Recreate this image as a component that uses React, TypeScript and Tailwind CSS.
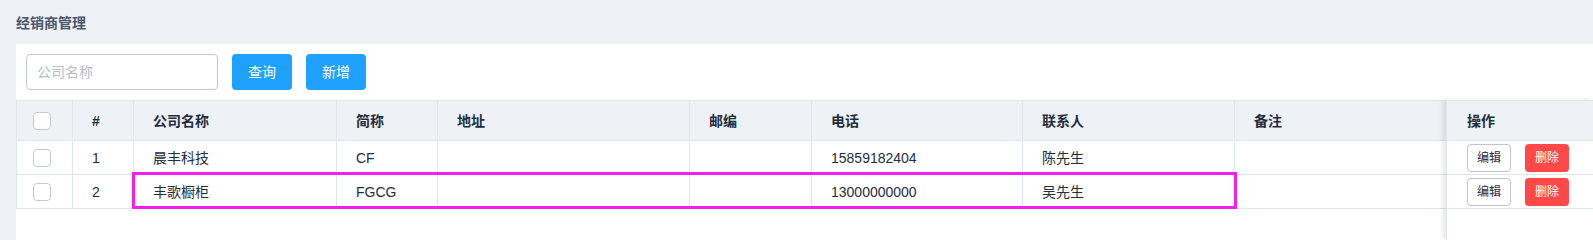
const font = { fontFamily: '"Liberation Sans", "Noto Sans CJK SC", sans-serif' };

const columns = ['#', '公司名称', '简称', '地址', '邮编', '电话', '联系人', '备注'];

const dealers = [
  { id: 1, name: '晨丰科技', short: 'CF', address: '', zip: '', phone: '15859182404', contact: '陈先生', note: '' },
  { id: 2, name: '丰歌橱柜', short: 'FGCG', address: '', zip: '', phone: '13000000000', contact: '吴先生', note: '' },
];

const grid = 'grid grid-cols-[56px_61px_203px_101px_252px_122px_211px_212px_1fr]';

function Checkbox() {
  return <span className="block w-[18px] h-[18px] rounded-[4px] border border-[#bfcbd9] bg-white" />;
}

function Cell({ children, last }: { children?: React.ReactNode; last?: boolean }) {
  return (
    <div className={`flex items-center pl-[19px] whitespace-nowrap ${last ? '' : 'border-r border-[#dfe6ec]'}`}>
      {children}
    </div>
  );
}

export default function App() {
  return (
    <div className="flex flex-col w-full min-h-screen overflow-hidden bg-[#eef1f6] text-[#1f2d3d]" style={font}>
      <div className="h-[44px] shrink-0 pl-4 pt-[13px] text-sm font-bold text-[#48576a]">经销商管理</div>

      <div className="relative flex-1 min-h-[180px] ml-4 bg-white">
        <div className="flex items-center gap-[14px] px-[10px] h-[56px]">
          <input
            className="w-[192px] h-[36px] rounded-[4px] border border-[#bfcbd9] px-[10px] text-sm outline-none placeholder:text-[#b4bccc]"
            placeholder="公司名称"
            style={font}
          />
          <button className="w-[60px] h-[36px] rounded-[4px] bg-[#20a0ff] text-sm text-white">查询</button>
          <button className="w-[60px] h-[36px] rounded-[4px] bg-[#20a0ff] text-sm text-white">新增</button>
        </div>

        <div className="border-t border-l border-[#dfe6ec] text-sm">
          <div className={`${grid} h-[40px] bg-[#eef1f6] border-b border-[#dfe6ec] font-bold`}>
            <div className="flex items-center pl-4 border-r border-[#dfe6ec]">
              <Checkbox />
            </div>
            {columns.map((c, i) => (
              <Cell key={c} last={i === columns.length - 1}>
                {c}
              </Cell>
            ))}
          </div>
          {dealers.map((d) => (
            <div key={d.id} className={`${grid} h-[34px] border-b border-[#dfe6ec]`}>
              <div className="flex items-center pl-4 border-r border-[#dfe6ec]">
                <Checkbox />
              </div>
              <Cell>{d.id}</Cell>
              <Cell>{d.name}</Cell>
              <Cell>{d.short}</Cell>
              <Cell>{d.address}</Cell>
              <Cell>{d.zip}</Cell>
              <Cell>{d.phone}</Cell>
              <Cell>{d.contact}</Cell>
              <Cell last>{d.note}</Cell>
            </div>
          ))}
        </div>

        {/* fixed action column */}
        <div className="absolute left-[1430px] right-0 top-[56px] bottom-0 bg-white border-l border-[#dfe6ec] shadow-[-3px_0_5px_rgba(0,0,0,0.1)] text-sm">
          <div className="h-[41px] flex items-center pl-5 bg-[#eef1f6] border-t border-b border-[#dfe6ec] font-bold">操作</div>
          {dealers.map((d) => (
            <div key={d.id} className="h-[34px] flex items-center gap-[14px] pl-5 border-b border-[#dfe6ec]">
              <button className="w-[44px] h-[28px] rounded-[4px] border border-[#c4c4c4] bg-white text-xs text-[#1f2d3d]">编辑</button>
              <button className="w-[44px] h-[28px] rounded-[4px] bg-[#ff4949] text-xs text-white">删除</button>
            </div>
          ))}
        </div>

        {/* highlight */}
        <div className="absolute left-[116px] top-[128px] w-[1105px] h-[37px] border-[3px] border-[#f51ef0] pointer-events-none" />
      </div>
    </div>
  );
}
